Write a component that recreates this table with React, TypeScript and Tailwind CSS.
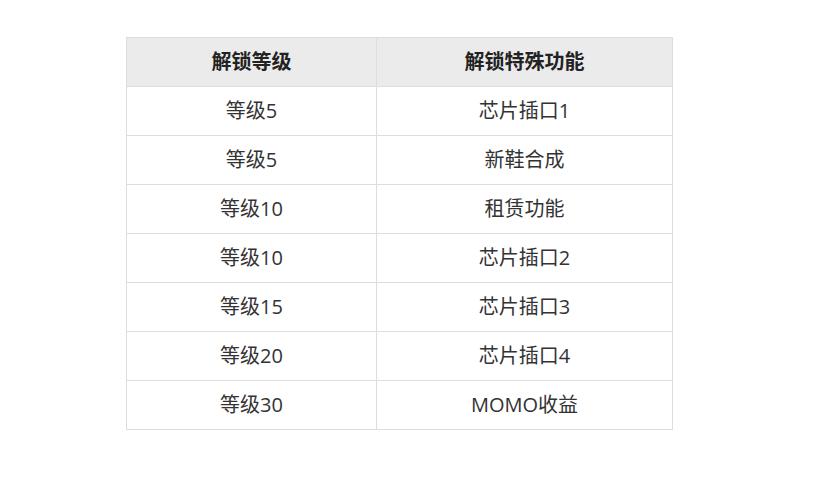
const rows: [string, string][] = [
  ["等级5", "芯片插口1"],
  ["等级5", "新鞋合成"],
  ["等级10", "租赁功能"],
  ["等级10", "芯片插口2"],
  ["等级15", "芯片插口3"],
  ["等级20", "芯片插口4"],
  ["等级30", "MOMO收益"],
];

export default function App() {
  return (
    <div
      className="w-[836px] h-[481px] bg-white pl-[126px] pt-[37px]"
      style={{ fontFamily: '"Open Sans", "Noto Sans CJK SC", sans-serif' }}
    >
      <table className="border-collapse text-[20px] leading-none text-[#333]">
        <thead>
          <tr className="bg-[#ebebeb] h-[49px]">
            <th className="w-[250px] border border-[#dedede] font-bold text-[#222] text-center">
              解锁等级
            </th>
            <th className="w-[296px] border border-[#dedede] font-bold text-[#222] text-center">
              解锁特殊功能
            </th>
          </tr>
        </thead>
        <tbody>
          {rows.map(([lv, fn], i) => (
            <tr key={i} className="h-[49px]">
              <td className="border border-[#dedede] text-center">{lv}</td>
              <td className="border border-[#dedede] text-center">{fn}</td>
            </tr>
          ))}
        </tbody>
      </table>
    </div>
  );
}
